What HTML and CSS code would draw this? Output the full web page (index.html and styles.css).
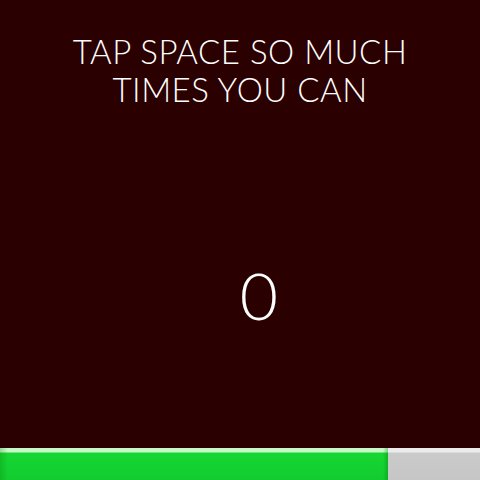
FILE: index.html
```html
<!DOCTYPE html>
<html>
<head>
<meta charset="utf-8">
<link rel="stylesheet" href="styles.css">
</head>
<body>
<div class="screen">
  <h1 class="title">TAP SPACE SO MUCH<br>TIMES YOU CAN</h1>
  <div class="counter">0</div>
  <div class="bar"><div class="fill" style="width:80.8%"></div></div>
</div>
</body>
</html>
```

FILE: styles.css
```css
html, body { margin: 0; padding: 0; }
body { background: #2b0000; }
.screen {
  width: 480px;
  height: 480px;
  display: flex;
  flex-direction: column;
  align-items: center;
  background: #2b0000;
  font-family: Lato, "DejaVu Sans", sans-serif;
  color: #ffffff;
}
.title {
  margin: 32px 0 0 0;
  font-weight: 300;
  font-size: 33px;
  line-height: 38px;
  text-align: center;
  letter-spacing: 0.5px;
}
.counter {
  margin-top: 154px;
  margin-left: 38px;
  font-weight: 300;
  font-size: 66px;
  line-height: 66px;
}
.bar {
  margin-top: auto;
  width: 100%;
  height: 32px;
  background: linear-gradient(#ececec 0, #ececec 4px, #cacaca 5px, #c6c6c6 100%);
  display: flex;
}
.fill {
  height: 100%;
  background:
    linear-gradient(90deg, rgba(0,120,0,0.25) 0, rgba(0,0,0,0) 8px, rgba(0,0,0,0) calc(100% - 5px), rgba(0,120,0,0.35) 100%),
    linear-gradient(#c8f8c8 0, #c8f8c8 4px, #16d634 5px, #12cc2f 100%);
}
```
